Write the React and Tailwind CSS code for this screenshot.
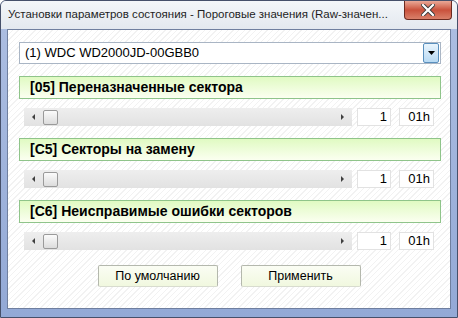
const SECTIONS = [
  { code: "[05]", name: "Переназначенные сектора", value: "1", hex: "01h" },
  { code: "[C5]", name: "Секторы на замену", value: "1", hex: "01h" },
  { code: "[C6]", name: "Неисправимые ошибки секторов", value: "1", hex: "01h" },
];

function CloseButton() {
  return (
    <div className="absolute right-[5px] top-0 h-[19px] w-[48px] rounded-b-[4px] border border-t-0 border-[#6b2a20] bg-linear-to-b from-[#e9a897] via-[#c9513c] to-[#d9806a] flex items-center justify-center">
      <svg width="14" height="12" viewBox="0 0 14 12">
        <path
          d="M2 1 L12 11 M12 1 L2 11"
          stroke="#3a3a3a"
          strokeWidth="4"
          strokeLinecap="square"
        />
        <path
          d="M2 1 L12 11 M12 1 L2 11"
          stroke="#ffffff"
          strokeWidth="2.2"
          strokeLinecap="square"
        />
      </svg>
    </div>
  );
}

function ComboBox() {
  return (
    <div className="flex h-[22px] items-center border border-[#a9b5c4] bg-white">
      <div className="flex-1 pl-[5px] text-[13px] text-black">
        (1) WDC WD2000JD-00GBB0
      </div>
      <div className="mr-px flex h-[20px] w-[16px] items-center justify-center rounded-[2px] border border-[#5a8fbd] bg-linear-to-b from-[#eaf5fd] to-[#b7d9f3]">
        <svg width="7" height="4" viewBox="0 0 7 4">
          <path d="M0 0 H7 L3.5 4 Z" fill="#000" />
        </svg>
      </div>
    </div>
  );
}

function SectionHeader({ code, name }) {
  return (
    <div className="flex h-[23px] items-center border border-[#8fc48a] bg-linear-to-b from-[#e0fac2] to-[#fbfff0] pl-[10px] text-[14px] font-bold text-black">
      {code} {name}
    </div>
  );
}

function ScrollRow({ value, hex }) {
  return (
    <div className="ml-[5px] flex h-[18px] items-stretch">
      <div className="flex w-[328px] items-center bg-linear-to-b from-[#eeeeee] to-[#e2e2e2]">
        <div className="flex w-[19px] justify-center">
          <svg width="3" height="6" viewBox="0 0 3 6">
            <path d="M3 0 V6 L0 3 Z" fill="#404040" />
          </svg>
        </div>
        <div className="h-[15px] w-[15px] rounded-[2px] border border-[#9a9a9a] bg-linear-to-b from-[#fbfbfb] to-[#dcdcdc]" />
        <div className="flex-1" />
        <div className="flex w-[19px] justify-center">
          <svg width="3" height="6" viewBox="0 0 3 6">
            <path d="M0 0 V6 L3 3 Z" fill="#404040" />
          </svg>
        </div>
      </div>
      <div className="ml-[5px] flex w-[34px] items-center justify-end border border-[#e2e2e2] bg-white pr-[3px] text-[13px]">
        {value}
      </div>
      <div className="ml-[8px] flex w-[35px] items-center justify-end border border-[#e2e2e2] bg-white pr-[3px] text-[13px]">
        {hex}
      </div>
    </div>
  );
}

function DialogButton({ children }) {
  return (
    <button className="h-[22px] w-[120px] rounded-[2px] border border-[#b4b8ad] border-b-[#d8dccf] bg-linear-to-b from-[#fbfdf4] to-[#f1f8df] text-[12.5px] text-black">
      {children}
    </button>
  );
}

export default function App() {
  return (
    <div
      className="relative flex h-[318px] w-[458px] flex-col overflow-hidden rounded-t-[6px] border border-[#46506a] bg-linear-to-b from-[#aebfe2] to-[#93a9d6]"
      style={{ fontFamily: '"Liberation Sans", Arial, sans-serif' }}
    >
      <div className="flex h-[28px] shrink-0 items-start bg-linear-to-b from-[#f4f6f9] to-[#e3e8ef] pl-[7px] pt-[6px]">
        <div className="whitespace-nowrap text-[11.5px] leading-[15px] text-[#1e1e1e]">
          Установки параметров состояния - Пороговые значения (Raw-значен...
        </div>
      </div>
      <CloseButton />

      <div className="mx-[6px] mb-[8px] flex flex-1 flex-col border border-[#6f7f9f] bg-[repeating-linear-gradient(135deg,#ffffff_0px,#ffffff_3px,#f2f2f2_3px,#f2f2f2_4px)] pl-[11px] pr-[9px] pt-[12px]">
        <ComboBox />
        {SECTIONS.map((s, i) => (
          <div key={i} className="mt-[12px] flex flex-col">
            <SectionHeader code={s.code} name={s.name} />
            <div className="mt-[9px]">
              <ScrollRow value={s.value} hex={s.hex} />
            </div>
          </div>
        ))}
        <div className="mt-[15px] flex justify-center gap-[23px] pr-[2px]">
          <DialogButton>По умолчанию</DialogButton>
          <DialogButton>Применить</DialogButton>
        </div>
      </div>
    </div>
  );
}
